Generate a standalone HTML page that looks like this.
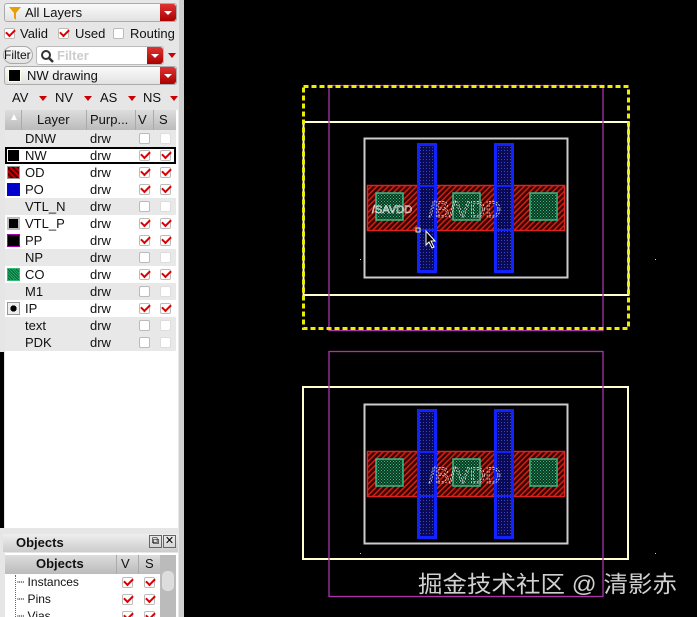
<!DOCTYPE html>
<html><head><meta charset="utf-8"><style>
*{margin:0;padding:0;box-sizing:border-box}
html,body{width:697px;height:617px;overflow:hidden}
body{background:#000;font-family:"Liberation Sans","DejaVu Sans",sans-serif;position:relative}
#panel{position:absolute;left:0;top:0;width:184px;height:617px;background:#e6e6e6;border-right:5px solid #cfcfcf;overflow:hidden}
.a{position:absolute}
.dd{background:linear-gradient(#fafafa,#e2e2e2);border:1px solid #aaa;border-radius:3px}
.rb{position:absolute;right:0;top:0;bottom:0;width:16px;background:linear-gradient(#d33,#a00);border-radius:0 3px 3px 0}
.rb:after{content:"";position:absolute;left:4px;top:7px;border-left:4px solid transparent;border-right:4px solid transparent;border-top:4px solid #fff}
.tri{display:inline-block;width:0;height:0;border-left:4px solid transparent;border-right:4px solid transparent;border-top:5px solid #c00;vertical-align:middle;margin:0 4px}
.cb{position:absolute;width:11px;height:11px;border:1px solid #bbb;background:#fff;border-radius:2px}
.cb.on:after{content:"";position:absolute;left:1px;top:0px;width:7px;height:4px;border-left:2px solid #d00;border-bottom:2px solid #d00;transform:rotate(-45deg)}
.t{font-size:13px;color:#111;position:absolute;white-space:nowrap}
.row{position:absolute;left:5px;width:171px;height:17px}
.sw{position:absolute;left:2px;top:2px;width:13px;height:13px;border:1px solid #999}
</style></head><body>
<div id="panel">
 <div class="a dd" style="left:4px;top:3px;width:173px;height:19px">
  <svg class="a" style="left:4px;top:3px" width="12" height="13"><path d="M0 0H12L7 6V13L5 11V6Z" fill="#e8a000"/></svg>
  <span class="t" style="left:20px;top:1px">All Layers</span><div class="rb"></div></div>
 <div class="cb on" style="left:4px;top:28px"></div><span class="t" style="left:20px;top:26px">Valid</span>
 <div class="cb on" style="left:58px;top:28px"></div><span class="t" style="left:75px;top:26px">Used</span>
 <div class="cb" style="left:113px;top:28px"></div><span class="t" style="left:130px;top:26px">Routing</span>
 <div class="a dd" style="left:3px;top:46px;width:30px;height:18px;border-radius:9px"><span class="t" style="left:0;top:1px;font-size:12px">Filter</span></div>
 <div class="a" style="left:36px;top:46px;width:128px;height:19px;background:#fff;border:1px solid #bbb;border-radius:3px">
  <svg class="a" style="left:3px;top:2px" width="14" height="14"><circle cx="6" cy="6" r="4" fill="none" stroke="#333" stroke-width="2"/><path d="M9 9L13 13" stroke="#333" stroke-width="2.5"/></svg>
  <span class="t" style="left:20px;top:1px;color:#ccc;font-weight:bold">Filter</span><div class="rb"></div></div>
 <span class="tri a" style="left:164px;top:53px"></span>
 <div class="a dd" style="left:4px;top:66px;width:173px;height:19px">
  <div class="a" style="left:3px;top:2px;width:13px;height:13px;background:#000;border:1px solid #ffd"></div>
  <span class="t" style="left:22px;top:1px">NW drawing</span><div class="rb"></div></div>
 <span class="t" style="left:12px;top:90px">AV</span><span class="tri a" style="left:35px;top:96px"></span>
 <span class="t" style="left:55px;top:90px">NV</span><span class="tri a" style="left:80px;top:96px"></span>
 <span class="t" style="left:100px;top:90px">AS</span><span class="tri a" style="left:124px;top:96px"></span>
 <span class="t" style="left:143px;top:90px">NS</span><span class="tri a" style="left:166px;top:96px"></span>
 <div class="a" style="left:5px;top:110px;width:173px;height:418px;background:#fff"></div>
 <div class="a" style="left:5px;top:110px;width:171px;height:20px;background:linear-gradient(#ddd,#bbb)">
  <span class="t" style="left:4px;top:2px;color:#fff;font-size:10px">▲</span>
  <div class="a" style="left:16px;top:0;height:20px;border-left:1px solid #aaa"></div>
  <span class="t" style="left:32px;top:2px">Layer</span>
  <div class="a" style="left:81px;top:0;height:20px;border-left:1px solid #aaa"></div>
  <span class="t" style="left:85px;top:2px">Purp...</span>
  <div class="a" style="left:130px;top:0;height:20px;border-left:1px solid #aaa"></div>
  <span class="t" style="left:133px;top:2px">V</span>
  <div class="a" style="left:148px;top:0;height:20px;border-left:1px solid #aaa"></div>
  <span class="t" style="left:154px;top:2px">S</span></div>
 <div id="rows"></div>
 <div class="a" style="left:0;top:352px;width:4px;height:176px;background:#000"></div>
 <div class="a" style="left:3px;top:534px;width:175px;height:18px;background:linear-gradient(#eee,#ccc)">
  <span class="t" style="left:13px;top:1px;font-weight:bold">Objects</span>
  <div class="a" style="left:146px;top:1px;width:13px;height:13px;border:1px solid #666;font-size:10px;text-align:center;line-height:11px">⧉</div>
  <div class="a" style="left:160px;top:1px;width:13px;height:13px;border:1px solid #666;font-size:11px;text-align:center;line-height:11px">✕</div></div>
 <div class="a" style="left:5px;top:553px;width:173px;height:64px;background:#fff"></div>
 <div class="a" style="left:5px;top:555px;width:155px;height:19px;background:linear-gradient(#ddd,#bbb)">
  <span class="t" style="left:31px;top:1px;font-weight:bold">Objects</span>
  <div class="a" style="left:111px;top:0;height:19px;border-left:1px solid #aaa"></div><span class="t" style="left:116px;top:1px">V</span>
  <div class="a" style="left:133px;top:0;height:19px;border-left:1px solid #aaa"></div><span class="t" style="left:140px;top:1px">S</span></div>
 <div class="a" style="left:160px;top:555px;width:16px;height:62px;background:#bbb"><div class="a" style="left:2px;top:16px;width:12px;height:20px;background:#ddd;border-radius:5px"></div></div>
 <div class="a" style="left:15px;top:575px;height:42px;border-left:1px dotted #666"></div>
 <span class="t" style="left:17px;top:575px;font-size:12px">┈ Instances</span><div class="cb on" style="left:122px;top:577px"></div><div class="cb on" style="left:144px;top:577px"></div>
 <span class="t" style="left:17px;top:592px;font-size:12px">┈ Pins</span><div class="cb on" style="left:122px;top:594px"></div><div class="cb on" style="left:144px;top:594px"></div>
 <span class="t" style="left:17px;top:609px;font-size:12px">┈ Vias</span><div class="cb on" style="left:122px;top:611px"></div><div class="cb on" style="left:144px;top:611px"></div>
</div>
<script>
var L=[["DNW",0,""],["NW",1,"nw"],["OD",1,"od"],["PO",1,"po"],["VTL_N",0,""],["VTL_P",1,"vp"],["PP",1,"pp"],["NP",0,""],["CO",1,"co"],["M1",0,""],["IP",1,"ip"],["text",0,""],["PDK",0,""]];
var sw={nw:"background:#000;border-color:#ffd",od:"background:repeating-linear-gradient(45deg,#c00 0 2px,#400 2px 4px)",po:"background:#00c;border-color:#00f",vp:"background:#000;border:2px solid #bbb",pp:"background:#000;border-color:#a0a",co:"background:repeating-linear-gradient(45deg,#2a6 0 1px,#063 1px 2px);border-color:#3b7",ip:"background:radial-gradient(#000 40%,#eee 42%);border-color:#999"};
var h="";L.forEach(function(r,i){var y=130+i*17;var bg=r[1]?"#fff":"#e8e8e8";var ex=r[0]=="NW"?"outline:2px solid #000;outline-offset:-2px;":"";
h+='<div class="row" style="top:'+y+'px;background:'+bg+';'+ex+'">'+(r[2]?'<div class="sw" style="'+sw[r[2]]+'"></div>':'')+'<span class="t" style="left:20px;top:1px">'+r[0]+'</span><span class="t" style="left:85px;top:1px">drw</span><div class="cb'+(r[1]?' on':'')+'" style="left:134px;top:3px"></div><div class="cb'+(r[1]?' on':'')+'" style="left:155px;top:3px;'+(r[1]?'':'border-color:#ddd')+'"></div></div>';});
document.getElementById("rows").innerHTML=h;
</script>
<svg class="a" style="left:0;top:0" width="697" height="617">
<defs>
<pattern id="hat" width="4" height="4" patternUnits="userSpaceOnUse" patternTransform="rotate(45)"><rect width="4" height="4" fill="#3a0000"/><rect width="1.6" height="4" fill="#c21"/></pattern>
<pattern id="dot" width="3" height="3" patternUnits="userSpaceOnUse"><rect width="3" height="3" fill="#0a0a55"/><rect width="1" height="1" fill="#3344cc"/></pattern>
<pattern id="gdot" width="3" height="3" patternUnits="userSpaceOnUse"><rect width="3" height="3" fill="#0a3a1a"/><rect width="1" height="1" fill="#3b9"/><rect x="1.5" y="1.5" width="1" height="1" fill="#3b9"/></pattern>
<g id="cell">
<rect x="364.5" y="0.5" width="203" height="139" fill="none" stroke="#ccc" stroke-width="2"/>
<rect x="367.5" y="47.5" width="197" height="45" fill="url(#hat)" stroke="#d22" stroke-width="1.5"/>
<rect x="376" y="55" width="27" height="27" fill="url(#gdot)" stroke="#3b8" stroke-width="1.5"/>
<rect x="453" y="55" width="27" height="27" fill="url(#gdot)" stroke="#3b8" stroke-width="1.5"/>
<rect x="530" y="55" width="27" height="27" fill="url(#gdot)" stroke="#3b8" stroke-width="1.5"/>
<g fill="url(#dot)" stroke="#12f" stroke-width="3"><rect x="418.5" y="6.5" width="17" height="127"/><rect x="495.5" y="6.5" width="17" height="127"/></g>
<path d="M418 48H437M418 92H437M495 48H514M495 92H514" stroke="#12f" stroke-width="2"/>
<text x="429" y="79" fill="none" stroke="#eee" stroke-width="0.7" stroke-dasharray="2 1.5" font-family="Liberation Sans" font-size="22" textLength="72" lengthAdjust="spacingAndGlyphs">/B/VDD</text>
</g>
</defs>
<rect x="303.5" y="122" width="325" height="173" fill="none" stroke="#ffffd0" stroke-width="2"/>
<rect x="329" y="85.5" width="274" height="245" fill="none" stroke="#a3a" stroke-width="1.3"/>
<rect x="303.5" y="86.5" width="325" height="242" fill="none" stroke="#ee0" stroke-width="3" stroke-dasharray="5 3"/>
<use href="#cell" y="138"/>
<text x="372" y="213" fill="none" stroke="#eee" stroke-width="0.6" font-family="Liberation Sans" font-size="11" textLength="40" lengthAdjust="spacingAndGlyphs">/SAVDD</text>
<rect x="416" y="228" width="4" height="4" fill="none" stroke="#ee8"/>
<path d="M426 231V245L429 242L432 248L434 247L431 241H435Z" fill="#000" stroke="#fff" stroke-width="1"/>
<rect x="303" y="387" width="325" height="172" fill="none" stroke="#ffffd0" stroke-width="2"/>
<rect x="329" y="351.5" width="274" height="245" fill="none" stroke="#a3a" stroke-width="1.3"/>
<use href="#cell" y="404"/>
<g fill="#ccc"><rect x="360" y="259" width="1" height="1"/><rect x="655" y="259" width="1" height="1"/><rect x="360" y="553" width="1" height="1"/><rect x="655" y="553" width="1" height="1"/></g>
<text x="418" y="592" fill="#d0d0d0" font-family="Liberation Sans,Noto Sans CJK SC,sans-serif" font-size="23" textLength="259" lengthAdjust="spacingAndGlyphs">掘金技术社区 @ 清影赤</text>
</svg>
</body></html>
